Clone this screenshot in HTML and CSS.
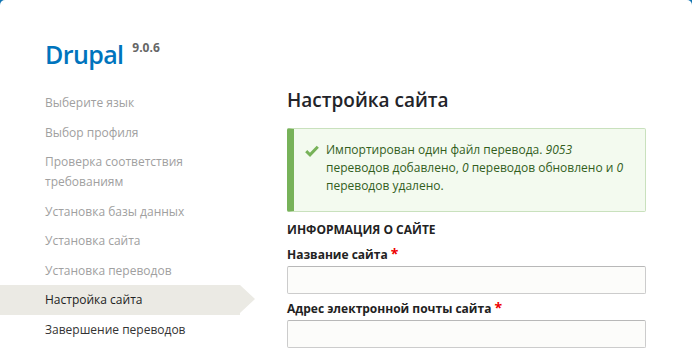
FILE: index.html
```html
<!DOCTYPE html>
<html lang="ru">
<head>
<meta charset="utf-8">
<title>Настройка сайта</title>
<link rel="stylesheet" href="styles.css">
</head>
<body>
<div class="layout">
  <header class="site-header">
    <h1 class="site-name">Drupal <span class="version">9.0.6</span></h1>
  </header>
  <div class="columns">
    <nav class="steps">
      <ol class="task-list">
        <li class="done">Выберите язык</li>
        <li class="done">Выбор профиля</li>
        <li class="done">Проверка соответствия требованиям</li>
        <li class="done">Установка базы данных</li>
        <li class="done">Установка сайта</li>
        <li class="done">Установка переводов</li>
        <li class="active">Настройка сайта</li>
        <li>Завершение переводов</li>
      </ol>
    </nav>
    <main class="content">
      <h2 class="page-title">Настройка сайта</h2>
      <div class="message">
        <svg class="check" width="14" height="12" viewBox="0 0 14 12"><path d="M1.2 6.2 L5 9.8 L12.8 1.8" fill="none" stroke="#77b259" stroke-width="3"/></svg>
        <p>Импортирован один файл перевода. <em>9053</em> переводов добавлено, <em>0</em> переводов обновлено и <em>0</em> переводов удалено.</p>
      </div>
      <h3 class="legend">ИНФОРМАЦИЯ О САЙТЕ</h3>
      <label class="field-label">Название сайта <span class="req">*</span></label>
      <div class="input"></div>
      <label class="field-label">Адрес электронной почты сайта <span class="req">*</span></label>
      <div class="input"></div>
    </main>
  </div>
</div>
</body>
</html>
```
FILE: styles.css
```css
html, body {
  margin: 0;
  padding: 0;
}
body {
  background: #1275b2;
  font-family: "Open Sans", "DejaVu Sans", sans-serif;
  width: 692px;
  height: 349px;
  overflow: hidden;
}
.layout {
  background: #fff;
  border-radius: 5px 5px 0 0;
  height: 349px;
}
.site-header {
  padding: 33px 0 0 45px;
  height: 46px;
}
.site-name {
  margin: 0;
  font-size: 25px;
  line-height: 30px;
  font-weight: 600;
  color: #0074bd;
  letter-spacing: -0.6px;
}
.version {
  font-size: 12px;
  font-weight: 700;
  color: #666;
  vertical-align: 12px;
  margin-left: 3px;
  letter-spacing: 0;
}
.columns {
  display: flex;
}
.steps {
  width: 256px;
  flex: none;
}
.task-list {
  list-style: none;
  margin: 9px 0 0;
  padding: 0;
}
.task-list li {
  position: relative;
  width: 240px;
  box-sizing: border-box;
  padding: 5px 20px 4.5px 45px;
  font-size: 12px;
  line-height: 20px;
  color: #333;
}
.task-list li.done {
  color: #a0a0a0;
}
.task-list li.active {
  background: #ebeae4;
  color: #222;
}
.task-list li.active::after {
  content: "";
  position: absolute;
  right: -15px;
  top: 0;
  border-style: solid;
  border-width: 14.75px 0 14.75px 15px;
  border-color: transparent transparent transparent #ebeae4;
}
.content {
  margin-left: 31px;
  width: 359px;
}
.page-title {
  margin: 8px 0 15px;
  font-size: 19px;
  line-height: 26px;
  font-weight: 600;
  color: #232429;
}
.message {
  display: flex;
  align-items: flex-start;
  box-sizing: border-box;
  height: 84px;
  background: #f3faef;
  border: 1px solid #c9e1bd;
  border-left: 7px solid #77b259;
  border-radius: 2px;
  padding: 12px 16px 0 11px;
  color: #325e1c;
}
.check {
  flex: none;
  margin: 4px 7px 0 0;
}
.message p {
  margin: 0;
  font-size: 12px;
  line-height: 18px;
}
.message em {
  font-style: italic;
}
.legend {
  margin: 9px 0 0;
  font-size: 12px;
  line-height: 18px;
  font-weight: 700;
  color: #222;
}
.field-label {
  display: block;
  margin-top: 6px;
  font-size: 12px;
  line-height: 18px;
  font-weight: 700;
  color: #222;
}
.input + .field-label {
  margin-top: 5px;
}
.req {
  color: #e00;
  font-size: 14px;
}
.input {
  box-sizing: border-box;
  height: 28px;
  margin-top: 2px;
  background: #fcfcfa;
  border: 1px solid #ccc;
  border-top-color: #b8b8b8;
  border-radius: 2px;
}
```
